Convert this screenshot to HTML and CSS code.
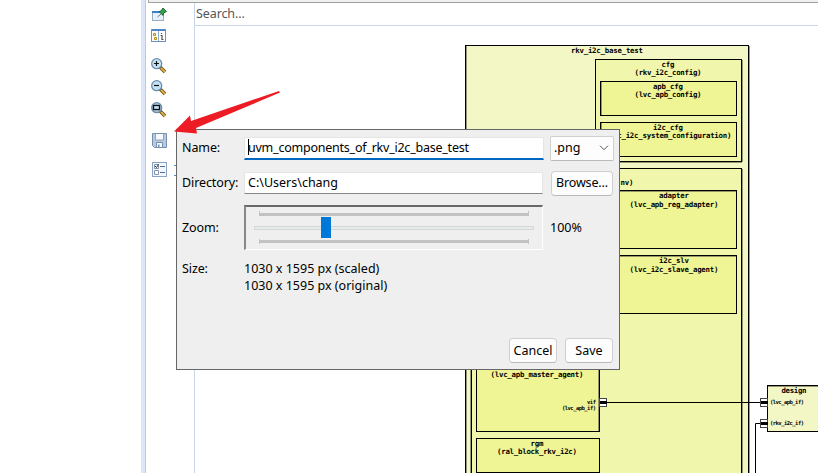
FILE: index.html
```html
<!DOCTYPE html>
<html lang="en">
<head>
<meta charset="utf-8">
<title>UVM Components</title>
<link rel="stylesheet" href="styles.css">
</head>
<body>
<div class="app">
  <div class="editor"></div>
  <div class="sash"></div>
  <div class="view">
    <div class="tabstrip"></div>
    <div class="view-body">
      <div class="toolbar">
        <svg class="icon pin" width="16" height="16" viewBox="0 0 16 16"><rect x=".5" y="4.500" width="11" height="9" fill="#e4f0fb" stroke="#9aaac0"/><path d="M0 5h11" stroke="#3b7fc9" stroke-width="2"/><path d="M5.500 10l3.500-3" stroke="#777"/><path d="M7 4.500l2-.5 2-3 3.500 3.500-3 1.500-.500 2.500z" fill="#35a34a" stroke="#176b37"/></svg>
        <svg class="icon info" width="16" height="16" viewBox="0 0 16 16"><rect x=".5" y="2.500" width="14" height="12" fill="#fff" stroke="#6d91c5"/><path d="M1 3h13" stroke="#4f84c9" stroke-width="2"/><path d="M7.500 4v10" stroke="#8caed5"/><path d="M2.500 6.500h2v2h-2zM3.500 10.500h2v2h-2z" fill="#ffe69a" stroke="#c18a16"/><path d="M10.500 6v1M9.500 8.500h1.500v4h1.500" fill="none" stroke="#555" stroke-width="1.200"/></svg>
        <svg class="icon zoom-in" width="16" height="16" viewBox="0 0 16 16"><path d="M9 9l5 5" stroke="#79540c" stroke-width="3.500"/><path d="M10 10l4 4" stroke="#e6bd58" stroke-width="1.700"/><circle cx="5.700" cy="5.700" r="5" fill="#c3e3f5" stroke="#6d8cab" stroke-width="1.300"/><path d="M3 5.500h5M5.500 3v5" stroke="#111" stroke-width="1.200"/></svg>
        <svg class="icon zoom-out" width="16" height="16" viewBox="0 0 16 16"><path d="M9 9l5 5" stroke="#79540c" stroke-width="3.500"/><path d="M10 10l4 4" stroke="#e6bd58" stroke-width="1.700"/><circle cx="5.700" cy="5.700" r="5" fill="#c3e3f5" stroke="#6d8cab" stroke-width="1.300"/><path d="M3 5.500h5" stroke="#111" stroke-width="1.200"/></svg>
        <svg class="icon zoom-fit" width="16" height="16" viewBox="0 0 16 16"><path d="M9 9l5 5" stroke="#79540c" stroke-width="3.500"/><path d="M10 10l4 4" stroke="#e6bd58" stroke-width="1.700"/><circle cx="5.700" cy="5.700" r="5" fill="#a6c4d8" stroke="#6d8cab" stroke-width="1.300"/><rect x="2.500" y="3.500" width="6" height="4" fill="#c3e3f5" stroke="#111" stroke-width="1.300"/></svg>
        <svg class="icon save-icon" width="16" height="16" viewBox="0 0 16 16"><path d="M.5.500h14v14h-12l-2-2z" fill="#b7c9df" stroke="#7590b0"/><path d="M3.500 1v6h8V1" fill="#f7fafd" stroke="#8ba5c2"/><path d="M4.500 14V9.500h6V14" fill="#f7fafd" stroke="#7590b0"/><path d="M6 11.500h1.500V14H6z" fill="#7590b0"/></svg>
        <svg class="icon prefs" width="16" height="16" viewBox="0 0 16 16"><rect x=".5" y=".5" width="14" height="14" fill="#f3f8fe" stroke="#89a4c7"/><path d="M2.500 2.500h4v4h-4zM2.500 8.500h4v4h-4z" fill="#fff" stroke="#8494ac"/><path d="M3 4l1.500 1.500 2-3" fill="none" stroke="#333"/><path d="M8 4.500h5M8 10.500h5" stroke="#526e95"/></svg>
      </div>
      <div class="content">
        <div class="search">Search...</div>
        <svg class="diagram" width="623" height="447" viewBox="195 26 623 447">
          <g stroke="#000">
            <rect class="lvl1" x="465.500" y="45.500" width="283" height="440"/>
            <rect class="lvl2" x="595.500" y="59.500" width="146" height="102"/>
            <rect class="lvl3" x="600.500" y="81.500" width="136" height="34"/>
            <rect class="lvl3" x="600.500" y="122.500" width="136" height="34"/>
            <rect class="lvl2" x="471.500" y="168.500" width="270" height="320"/>
            <rect class="lvl3" x="606.500" y="190.500" width="130" height="58"/>
            <rect class="lvl3" x="606.500" y="255.500" width="130" height="58"/>
            <rect class="lvl3" x="476.500" y="350.500" width="123" height="81"/>
            <rect class="lvl3" x="476.500" y="438.500" width="123" height="34"/>
            <rect class="lvl1" x="767.500" y="385.500" width="60" height="46"/>
          </g>
          <g class="shade">
            <path d="M466.500 46v440M749.500 46v440M742.500 60v102M596 162.500h146M470.500 169v310M742.500 169v310M607 191.500h129M607 256.500h129M598.500 351v80M768 386.500h51M601.500 82v33M601.500 123v33"/>
          </g>
          <path d="M606 402.500h155M761 423.500h-5.500V480" fill="none" stroke="#000"/>
          <g class="port">
            <rect x="599.500" y="398.500" width="7" height="8"/><path d="M600 402.500h7"/>
            <rect x="760.500" y="398.500" width="7" height="8"/><path d="M761 402.500h7"/>
            <rect x="760.500" y="419.500" width="7" height="8"/><path d="M761 423.500h7"/>
          </g>
          <g class="labels">
            <text x="607" y="53" textLength="72">rkv_i2c_base_test</text>
            <text x="668" y="67" textLength="13">cfg</text>
            <text x="668" y="75" textLength="67">(rkv_i2c_config)</text>
            <text x="668" y="89" textLength="30">apb_cfg</text>
            <text x="668" y="97" textLength="67">(lvc_apb_config)</text>
            <text x="668" y="130" textLength="30">i2c_cfg</text>
            <text x="668" y="138" textLength="127">(lvc_i2c_system_configuration)</text>
            <text x="627" y="185" textLength="13">nv)</text>
            <text x="674" y="198" textLength="30">adapter</text>
            <text x="674" y="207" textLength="89">(lvc_apb_reg_adapter)</text>
            <text x="674" y="263" textLength="30">i2c_slv</text>
            <text x="674" y="272" textLength="89">(lvc_i2c_slave_agent)</text>
            <text x="537" y="377" textLength="93">(lvc_apb_master_agent)</text>
            <text x="537" y="446" textLength="13">rgm</text>
            <text x="537" y="454" textLength="80">(ral_block_rkv_i2c)</text>
            <text x="794" y="393" textLength="25">design</text>
          </g>
          <g class="labels small">
            <text x="591.500" y="404" textLength="9">vif</text>
            <text x="579" y="410" textLength="34">(lvc_apb_if)</text>
            <text x="787" y="404" textLength="34">(lvc_apb_if)</text>
            <text x="787" y="425" textLength="34">(rkv_i2c_if)</text>
          </g>
        </svg>
      </div>
    </div>
  </div>
</div>

<svg class="menu-hint" width="3" height="12" viewBox="0 0 3 12"><path d="M0 .5h3M0 10.500h3" stroke="#4f8db8"/></svg>

<div class="dialog">
  <div class="form">
    <label class="label">Name:</label>
    <div class="field focused"><i class="caret"></i><span>uvm_components_of_rkv_i2c_base_test</span></div>
    <div class="select"><span>.png</span><svg width="10" height="6" viewBox="0 0 10 6"><path d="M1 .7l4 4 4-4" fill="none" stroke="#555"/></svg></div>

    <label class="label">Directory:</label>
    <div class="field">C:\Users\chang</div>
    <div class="button browse">Browse...</div>

    <label class="label">Zoom:</label>
    <div class="slider">
      <svg width="296" height="42" viewBox="246 207 296 42"><path d="M259.500 211v5M528.500 211v5M259.500 239v5M528.500 239v5" stroke="#c2c2c2"/><path d="M259 214.500h270M259 241.500h270" stroke="#c2c2c2" stroke-width="3"/><rect x="254.500" y="226.500" width="279" height="3" fill="#e7eaea" stroke="#d6d8d8"/><rect x="321" y="217" width="10" height="21" fill="#0078d7"/></svg>
    </div>
    <div class="percent">100%</div>

    <label class="label size-label">Size:</label>
    <div class="sizes"><div>1030 x 1595 px (scaled)</div><div>1030 x 1595 px (original)</div></div>
  </div>
  <div class="actions">
    <div class="button">Cancel</div>
    <div class="button">Save</div>
  </div>
</div>

<svg class="arrow" width="107" height="44" viewBox="174 90 107 44"><path d="M174 131.500L190 115.500 191 121 279 91 280 92.500 196 128 197 133.500z" fill="#ed1c24"/></svg>
</body>
</html>
```

FILE: styles.css
```css
* { box-sizing: border-box; }
body {
  margin: 0;
  width: 818px;
  height: 473px;
  overflow: hidden;
  background: #fff;
  color: #000;
  font: 12.5px/17px "Noto Sans", sans-serif;
}
.app { display: flex; height: 473px; }
.editor { width: 141px; }
.sash { width: 5px; background: #dfe6f7; border-right: 1px solid #c8c8c8; }
.view { flex: 1; display: flex; flex-direction: column; }
.tabstrip { height: 3px; margin-left: 2px; background: #f0f0f0; border-left: 1px solid #aaa; border-bottom: 1px solid #a0a0a0; }
.view-body { flex: 1; display: flex; }
.toolbar { width: 48px; padding: 4px 0 0 5px; display: flex; flex-direction: column; }
.icon { flex: none; display: block; }
.pin { margin-left: 1px; }
.info { margin-top: 4px; }
.zoom-in { margin-top: 15px; }
.zoom-out, .zoom-fit { margin-top: 6px; }
.save-icon { margin: 15px 0 0 1px; }
.prefs { margin: 13px 0 0 1px; }
.content { flex: 1; border-left: 1px solid #c7d6e8; }
.search { height: 23px; padding-left: 1px; border-bottom: 1px solid #c7d6e8; color: #555; line-height: 22px; letter-spacing: -0.1px; }
.diagram { display: block; }
.lvl1 { fill: #f3f7c5; }
.lvl2 { fill: #f0f6ab; }
.lvl3 { fill: #eff594; }
.shade { fill: none; stroke: #7d7e5f; stroke-opacity: .8; }
.port rect { fill: #fff; stroke: #444; }
.port path { stroke: #000; stroke-width: 3; }
.labels { font: bold 7.4px "DejaVu Sans Mono", monospace; text-anchor: middle; }
.small { font-size: 5.5px; }

.menu-hint { position: absolute; left: 174px; top: 165px; }
.arrow { position: absolute; left: 174px; top: 90px; }
.dialog {
  position: absolute;
  left: 176px;
  top: 129px;
  width: 444px;
  height: 241px;
  background: #efefef;
  border: 1px solid #666;
  display: flex;
  flex-direction: column;
  justify-content: space-between;
  padding: 5px 6px 6px 5px;
}
.form {
  display: grid;
  grid-template-columns: 56px 300px 63px;
  grid-template-rows: 26px 26px 46px 34px;
  column-gap: 6px;
  row-gap: 9px;
  align-items: center;
}
.label { white-space: nowrap; padding-bottom: 2px; letter-spacing: -0.1px; }
.percent { padding-bottom: 2px; }
.field {
  display: flex;
  align-items: center;
  height: 22px;
  padding: 0 0 1px 3px;
  background: #fff;
  border: 1px solid #e5e5e5;
  border-bottom-color: #868686;
  margin-right: 1px;
  white-space: nowrap;
}
.focused { margin-right: 0; border-bottom: 2px solid #0067c0; height: 23px; letter-spacing: -0.23px; }
.caret { width: 1px; height: 16px; margin-right: -1px; background: #000; }
.select, .button {
  display: flex;
  align-items: center;
  height: 25px;
  background: #fdfdfd;
  border: 1px solid #d0d0d0;
  border-bottom-color: #bababa;
}
.select { width: 64px; padding: 0 4px 1px 3px; justify-content: space-between; border-radius: 2px; }
.button { width: 48px; justify-content: center; border-radius: 4px; }
.browse { width: 62px; margin-left: 1px; padding-bottom: 1px; letter-spacing: -0.15px; }
.slider { align-self: start; height: 45px; margin-right: 1px; border: 2px solid #696969; border-right: 1px solid #fff; border-bottom: 1px solid #fff; border-left: 2px solid #888; }
.slider svg { display: block; }
.size-label { align-self: start; }
.sizes { align-self: start; }
.actions { display: flex; justify-content: flex-end; gap: 8px; }
```
